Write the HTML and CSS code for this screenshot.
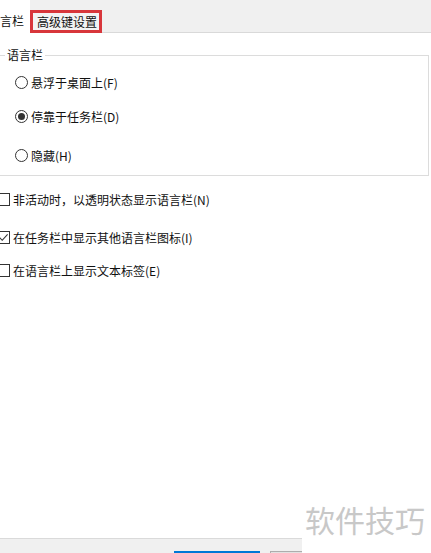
FILE: index.html
```html
<!DOCTYPE html>
<html>
<head>
    <title>文本服务和输入语言</title>
    <link rel="stylesheet" href="styles.css">
</head>
<body>
    <div class="tabs">
        <div class="tab tab-active">言栏</div>
        <div class="tab tab-marked">高级键设置</div>
    </div>

    <div class="group">
        <div class="group-title">语言栏</div>
        <div class="option option-first">
            <span class="radio"></span>悬浮于桌面上(F)
        </div>
        <div class="option option-second">
            <span class="radio radio-on"></span>停靠于任务栏(D)
        </div>
        <div class="option option-third">
            <span class="radio"></span>隐藏(H)
        </div>
    </div>

    <div class="check check-first">
        <span class="box"></span>非活动时，以透明状态显示语言栏(N)
    </div>
    <div class="check check-second">
        <span class="box">
            <svg width="11" height="11" viewBox="0 0 11 11"><polyline points="1.5,5.5 4.2,8.3 9.6,2.4" fill="none" stroke="#333" stroke-width="1.1"/></svg>
        </span>在任务栏中显示其他语言栏图标(I)
    </div>
    <div class="check check-third">
        <span class="box"></span>在语言栏上显示文本标签(E)
    </div>

    <div class="footer">
        <div class="btn btn-default"></div>
        <div class="btn"></div>
    </div>

    <div class="watermark">软件技巧</div>
</body>
</html>
```

FILE: styles.css
```css
html, body {
    margin: 0;
    height: 100%;
}

body {
    display: flex;
    flex-direction: column;
    position: relative;
    overflow: hidden;
    font-family: "Noto Sans CJK SC", "Liberation Sans", sans-serif;
    font-size: 12px;
    color: #111;
    background-color: #fff;
}

/* tab strip */
.tabs {
    display: flex;
    align-items: flex-start;
    height: 32px;
    flex-shrink: 0;
    background-color: #f0f0f0;
    border-bottom: 1px solid #d9d9d9;
}

.tab {
    line-height: 17px;
    white-space: nowrap;
}

.tab-active {
    width: 30px;
    height: 33px;
    padding-top: 12px;
    box-sizing: border-box;
    background-color: #fff;
}

.tab-marked {
    margin-top: 10px;
    padding: 0 2px 0 4px;
    border: 3px solid #d8363b;
    background-color: #f3f3f3;
}

/* group box */
.group {
    height: 119px;
    flex-shrink: 0;
    margin: 22px 2px 0 -4px;
    border: 1px solid #dcdcdc;
}

.group-title {
    display: table;
    margin: -9px 0 0 8px;
    padding: 0 2px;
    line-height: 16px;
    background-color: #fff;
}

.option {
    display: flex;
    align-items: center;
    height: 20px;
    padding-left: 18px;
}

.option-first { margin-top: 9px; }
.option-second { margin-top: 14px; }
.option-third { margin-top: 19px; }

.radio {
    width: 13px;
    height: 13px;
    margin-right: 3px;
    box-sizing: border-box;
    border: 1px solid #333;
    border-radius: 50%;
    display: flex;
    align-items: center;
    justify-content: center;
}

.radio-on::after {
    content: "";
    width: 7px;
    height: 7px;
    border-radius: 50%;
    background-color: #333;
}

/* check boxes */
.check {
    display: flex;
    align-items: center;
    height: 20px;
    flex-shrink: 0;
    margin-left: -3px;
}

.check-first { margin-top: 13px; }
.check-second { margin-top: 18px; }
.check-third { margin-top: 13px; }

.box {
    width: 13px;
    height: 13px;
    margin-right: 3px;
    box-sizing: border-box;
    border: 1px solid #333;
    display: flex;
    align-items: center;
    justify-content: center;
}

/* bottom button bar */
.footer {
    margin-top: auto;
    height: 15px;
    flex-shrink: 0;
    display: flex;
    gap: 10px;
    padding: 12px 0 0 174px;
    box-sizing: border-box;
    background-color: #f0f0f0;
    border-top: 1px solid #dadada;
    overflow: hidden;
}

.btn {
    width: 86px;
    height: 23px;
    flex-shrink: 0;
    box-sizing: border-box;
    border: 1px solid #adadad;
    background-color: #e1e1e1;
}

.btn-default {
    border: 2px solid #0078d7;
    background-color: #e5f1fb;
}

/* site watermark over the corner */
.watermark {
    position: absolute;
    right: 0;
    bottom: 0;
    width: 126px;
    height: 52px;
    padding-left: 3px;
    background-color: #fff;
    font-size: 30px;
    line-height: 36px;
    color: #c8c8c8;
    white-space: nowrap;
}
```
